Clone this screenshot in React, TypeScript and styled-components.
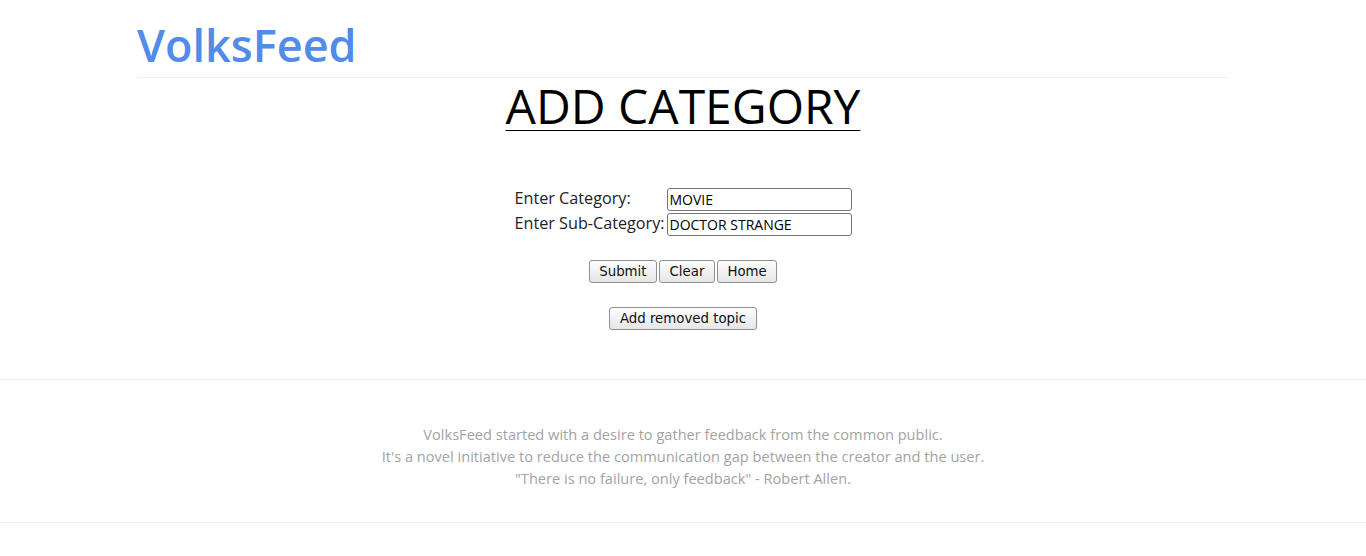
import { useState } from "react";
import styled, { createGlobalStyle } from "styled-components";

const GlobalStyle = createGlobalStyle`
  body {
    margin: 0;
    background: #fff;
    font-family: "Open Sans", "Liberation Sans", sans-serif;
    color: #000;
  }
`;

const Container = styled.div`
  width: 1092px;
  margin: 0 auto;
`;
const Header = styled.header`
  padding-top: 22px;
  padding-bottom: 9px;
  border-bottom: 1px solid #eeeeee;
`;
const Brand = styled.h1`
  margin: 0;
  font-size: 45px;
  line-height: 46px;
  font-weight: 600;
  color: #528be8;
`;
const Title = styled.h2`
  margin: 4px 0 0;
  text-align: center;
  font-size: 48px;
  line-height: 48px;
  font-weight: 400;
  text-decoration: underline;
  text-decoration-thickness: 1px;
  text-underline-offset: 6px;
`;
const Form = styled.form`
  display: flex;
  flex-direction: column;
  align-items: center;
  margin-top: 58px;
`;
const Fields = styled.div`
  display: grid;
  grid-template-columns: 152px 185px;
  row-gap: 2px;
`;
const Label = styled.label`
  font-size: 16.2px;
  line-height: 21px;
  color: #222;
  white-space: nowrap;
`;
const Input = styled.input`
  box-sizing: border-box;
  width: 185px;
  height: 23px;
  padding: 1px 2px;
  border: 1px solid #767676;
  border-radius: 3px;
  font-family: "Open Sans", sans-serif;
  font-size: 14px;
  color: #000;
  outline: none;
`;
const ButtonRow = styled.div<{ $top: number }>`
  display: flex;
  justify-content: center;
  gap: 2px;
  margin-top: ${(p) => p.$top}px;
`;
const Button = styled.button`
  box-sizing: border-box;
  height: 23px;
  padding: 0 9.5px;
  border: 1px solid #8f8f8f;
  border-radius: 3px;
  background: linear-gradient(#fdfdfd, #e6e6e6);
  font-family: "DejaVu Sans", sans-serif;
  font-size: 13.33px;
  color: #111;
  cursor: pointer;
`;
const Footer = styled.footer`
  margin-top: 49px;
  border-top: 1px solid #eeeeee;
  border-bottom: 1px solid #eeeeee;
  padding: 43px 0 33px;
  text-align: center;
  font-size: 14.6px;
  line-height: 22px;
  color: #a3a3a3;
`;
const Line = styled.div``;

export default function App() {
  const [category, setCategory] = useState("MOVIE");
  const [sub, setSub] = useState("DOCTOR STRANGE");

  return (
    <>
      <GlobalStyle />
      <Container>
        <Header>
          <Brand>VolksFeed</Brand>
        </Header>
        <Title>ADD CATEGORY</Title>
        <Form onSubmit={(e) => e.preventDefault()}>
          <Fields>
            <Label htmlFor="cat">Enter Category:</Label>
            <Input id="cat" value={category} onChange={(e) => setCategory(e.target.value)} />
            <Label htmlFor="sub">Enter Sub-Category:</Label>
            <Input id="sub" value={sub} onChange={(e) => setSub(e.target.value)} />
          </Fields>
          <ButtonRow $top={24}>
            <Button type="submit">Submit</Button>
            <Button
              type="button"
              onClick={() => {
                setCategory("");
                setSub("");
              }}
            >
              Clear
            </Button>
            <Button type="button">Home</Button>
          </ButtonRow>
          <ButtonRow $top={24}>
            <Button type="button">Add removed topic</Button>
          </ButtonRow>
        </Form>
      </Container>
      <Footer>
        <Line>VolksFeed started with a desire to gather feedback from the common public.</Line>
        <Line>It's a novel initiative to reduce the communication gap between the creator and the user.</Line>
        <Line>"There is no failure, only feedback" - Robert Allen.</Line>
      </Footer>
    </>
  );
}
